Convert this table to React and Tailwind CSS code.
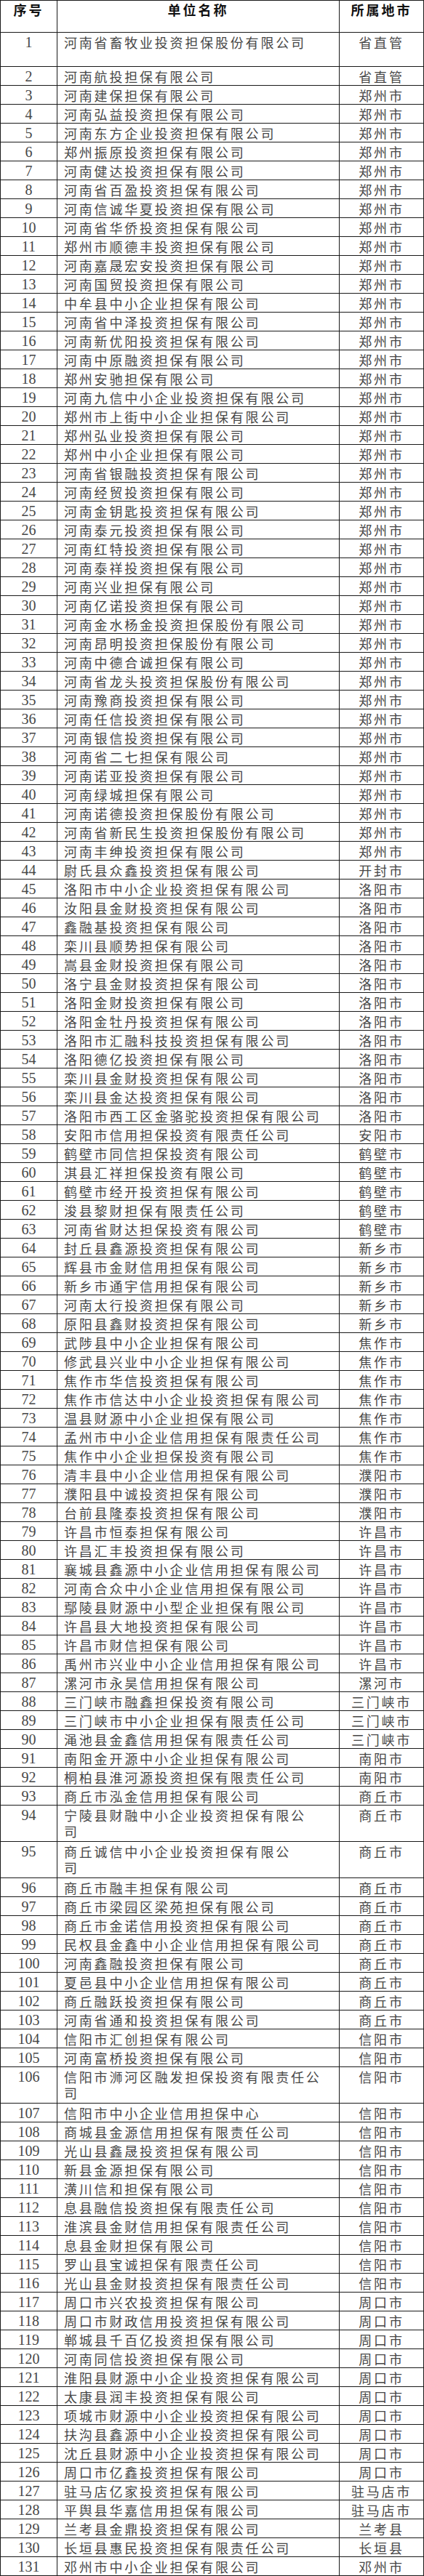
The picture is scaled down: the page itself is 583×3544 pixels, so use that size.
const ROWS = [
  ["河南省畜牧业投资担保股份有限公司", "省直管"],
  ["河南航投担保有限公司", "省直管"],
  ["河南建保担保有限公司", "郑州市"],
  ["河南弘益投资担保有限公司", "郑州市"],
  ["河南东方企业投资担保有限公司", "郑州市"],
  ["郑州振原投资担保有限公司", "郑州市"],
  ["河南健达投资担保有限公司", "郑州市"],
  ["河南省百盈投资担保有限公司", "郑州市"],
  ["河南信诚华夏投资担保有限公司", "郑州市"],
  ["河南省华侨投资担保有限公司", "郑州市"],
  ["郑州市顺德丰投资担保有限公司", "郑州市"],
  ["河南嘉晟宏安投资担保有限公司", "郑州市"],
  ["河南国贸投资担保有限公司", "郑州市"],
  ["中牟县中小企业担保有限公司", "郑州市"],
  ["河南省中泽投资担保有限公司", "郑州市"],
  ["河南新优阳投资担保有限公司", "郑州市"],
  ["河南中原融资担保有限公司", "郑州市"],
  ["郑州安驰担保有限公司", "郑州市"],
  ["河南九信中小企业投资担保有限公司", "郑州市"],
  ["郑州市上街中小企业担保有限公司", "郑州市"],
  ["郑州弘业投资担保有限公司", "郑州市"],
  ["郑州中小企业担保有限公司", "郑州市"],
  ["河南省银融投资担保有限公司", "郑州市"],
  ["河南经贸投资担保有限公司", "郑州市"],
  ["河南金钥匙投资担保有限公司", "郑州市"],
  ["河南泰元投资担保有限公司", "郑州市"],
  ["河南红特投资担保有限公司", "郑州市"],
  ["河南泰祥投资担保有限公司", "郑州市"],
  ["河南兴业担保有限公司", "郑州市"],
  ["河南亿诺投资担保有限公司", "郑州市"],
  ["河南金水杨金投资担保股份有限公司", "郑州市"],
  ["河南昂明投资担保股份有限公司", "郑州市"],
  ["河南中德合诚担保有限公司", "郑州市"],
  ["河南省龙头投资担保股份有限公司", "郑州市"],
  ["河南豫商投资担保有限公司", "郑州市"],
  ["河南任信投资担保有限公司", "郑州市"],
  ["河南银信投资担保有限公司", "郑州市"],
  ["河南省二七担保有限公司", "郑州市"],
  ["河南诺亚投资担保有限公司", "郑州市"],
  ["河南绿城担保有限公司", "郑州市"],
  ["河南诺德投资担保股份有限公司", "郑州市"],
  ["河南省新民生投资担保股份有限公司", "郑州市"],
  ["河南丰绅投资担保有限公司", "郑州市"],
  ["尉氏县众鑫投资担保有限公司", "开封市"],
  ["洛阳市中小企业投资担保有限公司", "洛阳市"],
  ["汝阳县金财投资担保有限公司", "洛阳市"],
  ["鑫融基投资担保有限公司", "洛阳市"],
  ["栾川县顺势担保有限公司", "洛阳市"],
  ["嵩县金财投资担保有限公司", "洛阳市"],
  ["洛宁县金财投资担保有限公司", "洛阳市"],
  ["洛阳金财投资担保有限公司", "洛阳市"],
  ["洛阳金牡丹投资担保有限公司", "洛阳市"],
  ["洛阳市汇融科技投资担保有限公司", "洛阳市"],
  ["洛阳德亿投资担保有限公司", "洛阳市"],
  ["栾川县金财投资担保有限公司", "洛阳市"],
  ["栾川县金达投资担保有限公司", "洛阳市"],
  ["洛阳市西工区金骆驼投资担保有限公司", "洛阳市"],
  ["安阳市信用担保投资有限责任公司", "安阳市"],
  ["鹤壁市同信担保投资有限公司", "鹤壁市"],
  ["淇县汇祥担保投资有限公司", "鹤壁市"],
  ["鹤壁市经开投资担保有限公司", "鹤壁市"],
  ["浚县黎财担保有限责任公司", "鹤壁市"],
  ["河南省财达担保投资有限公司", "鹤壁市"],
  ["封丘县鑫源投资担保有限公司", "新乡市"],
  ["辉县市金财信用担保有限公司", "新乡市"],
  ["新乡市通宇信用担保有限公司", "新乡市"],
  ["河南太行投资担保有限公司", "新乡市"],
  ["原阳县鑫财投资担保有限公司", "新乡市"],
  ["武陟县中小企业担保有限公司", "焦作市"],
  ["修武县兴业中小企业担保有限公司", "焦作市"],
  ["焦作市华信投资担保有限公司", "焦作市"],
  ["焦作市信达中小企业投资担保有限公司", "焦作市"],
  ["温县财源中小企业担保有限公司", "焦作市"],
  ["孟州市中小企业信用担保有限责任公司", "焦作市"],
  ["焦作中小企业担保投资有限公司", "焦作市"],
  ["清丰县中小企业信用担保有限公司", "濮阳市"],
  ["濮阳县中诚投资担保有限公司", "濮阳市"],
  ["台前县隆泰投资担保有限公司", "濮阳市"],
  ["许昌市恒泰担保有限公司", "许昌市"],
  ["许昌汇丰投资担保有限公司", "许昌市"],
  ["襄城县鑫源中小企业信用担保有限公司", "许昌市"],
  ["河南合众中小企业信用担保有限公司", "许昌市"],
  ["鄢陵县财源中小型企业担保有限公司", "许昌市"],
  ["许昌县大地投资担保有限公司", "许昌市"],
  ["许昌市财信担保有限公司", "许昌市"],
  ["禹州市兴业中小企业信用担保有限公司", "许昌市"],
  ["漯河市永昊信用担保有限公司", "漯河市"],
  ["三门峡市融鑫担保投资有限公司", "三门峡市"],
  ["三门峡市中小企业担保有限责任公司", "三门峡市"],
  ["渑池县金鑫信用担保有限责任公司", "三门峡市"],
  ["南阳金开源中小企业担保有限公司", "南阳市"],
  ["桐柏县淮河源投资担保有限责任公司", "南阳市"],
  ["商丘市泓金信用担保有限公司", "商丘市"],
  ["宁陵县财融中小企业投资担保有限公|司", "商丘市"],
  ["商丘诚信中小企业投资担保有限公|司", "商丘市"],
  ["商丘市融丰担保有限公司", "商丘市"],
  ["商丘市梁园区梁苑担保有限公司", "商丘市"],
  ["商丘市金诺信用投资担保有限公司", "商丘市"],
  ["民权县金鑫中小企业信用担保有限公司", "商丘市"],
  ["河南鑫融投资担保有限公司", "商丘市"],
  ["夏邑县中小企业信用担保有限公司", "商丘市"],
  ["商丘融跃投资担保有限公司", "商丘市"],
  ["河南省通和投资担保有限公司", "商丘市"],
  ["信阳市汇创担保有限公司", "信阳市"],
  ["河南富桥投资担保有限公司", "信阳市"],
  ["信阳市浉河区融发担保投资有限责任公|司", "信阳市"],
  ["信阳市中小企业信用担保中心", "信阳市"],
  ["商城县金源信用担保有限责任公司", "信阳市"],
  ["光山县鑫晟投资担保有限公司", "信阳市"],
  ["新县金源担保有限公司", "信阳市"],
  ["潢川信和担保有限公司", "信阳市"],
  ["息县融信投资担保有限责任公司", "信阳市"],
  ["淮滨县金财信用担保有限责任公司", "信阳市"],
  ["息县金财担保有限公司", "信阳市"],
  ["罗山县宝诚担保有限责任公司", "信阳市"],
  ["光山县金财投资担保有限责任公司", "信阳市"],
  ["周口市兴农投资担保有限公司", "周口市"],
  ["周口市财政信用投资担保有限公司", "周口市"],
  ["郸城县千百亿投资担保有限公司", "周口市"],
  ["河南同信投资担保有限公司", "周口市"],
  ["淮阳县财源中小企业投资担保有限公司", "周口市"],
  ["太康县润丰投资担保有限公司", "周口市"],
  ["项城市财源中小企业投资担保有限公司", "周口市"],
  ["扶沟县鑫源中小企业投资担保有限公司", "周口市"],
  ["沈丘县财源中小企业投资担保有限公司", "周口市"],
  ["周口市亿鑫投资担保有限公司", "周口市"],
  ["驻马店亿家投资担保有限公司", "驻马店市"],
  ["平舆县华嘉信用担保有限公司", "驻马店市"],
  ["兰考县金鼎投资担保有限公司", "兰考县"],
  ["长垣县惠民投资担保有限责任公司", "长垣县"],
  ["邓州市中小企业担保有限公司", "邓州市"],
];

const cjk = "font-['Noto_Sans_CJK_SC',sans-serif]";

function rowHeight(i, name) {
  if (i === 0) return "h-[47px]";
  if (name.includes("|")) return "h-[50px]";
  return "h-[26px]";
}

export default function App() {
  return (
    <div className="w-[583px] bg-white">
      <div className="grid grid-cols-[79px_388px_116px] h-[45px] border-t border-b border-[#1a1a1a] text-[#111]">
        <div className={`border-l border-r border-[#1a1a1a] text-center pt-[1px] text-[18px] leading-[22px] font-bold tracking-[3px] ${cjk}`}>
          序号
        </div>
        <div className={`border-r border-[#1a1a1a] text-center pt-[1px] text-[18px] leading-[22px] font-bold tracking-[3px] ${cjk}`}>
          单位名称
        </div>
        <div className={`border-r border-[#1a1a1a] text-center pt-[1px] text-[18px] leading-[22px] font-bold tracking-[3px] ${cjk}`}>
          所属地市
        </div>
      </div>
      {ROWS.map(([name, city], i) => {
        const parts = name.split("|");
        return (
          <div
            key={i}
            className={`grid grid-cols-[79px_388px_116px] border-b border-[#1a1a1a] text-[#474747] ${rowHeight(i, name)}`}
          >
            <div className="border-l border-r border-[#1a1a1a] text-center pt-[2px] text-[20px] leading-[22px] font-['Liberation_Serif',serif]">
              {i + 1}
            </div>
            <div className={`border-r border-[#1a1a1a] pl-[9px] pt-[2px] text-[18px] leading-[22px] tracking-[2.8px] whitespace-nowrap ${cjk}`}>
              {parts[0]}
              {parts[1] && (
                <>
                  <br />
                  {parts[1]}
                </>
              )}
            </div>
            <div className={`border-r border-[#1a1a1a] text-center pt-[2px] text-[18px] leading-[22px] tracking-[2.8px] whitespace-nowrap ${cjk}`}>
              {city}
            </div>
          </div>
        );
      })}
    </div>
  );
}
